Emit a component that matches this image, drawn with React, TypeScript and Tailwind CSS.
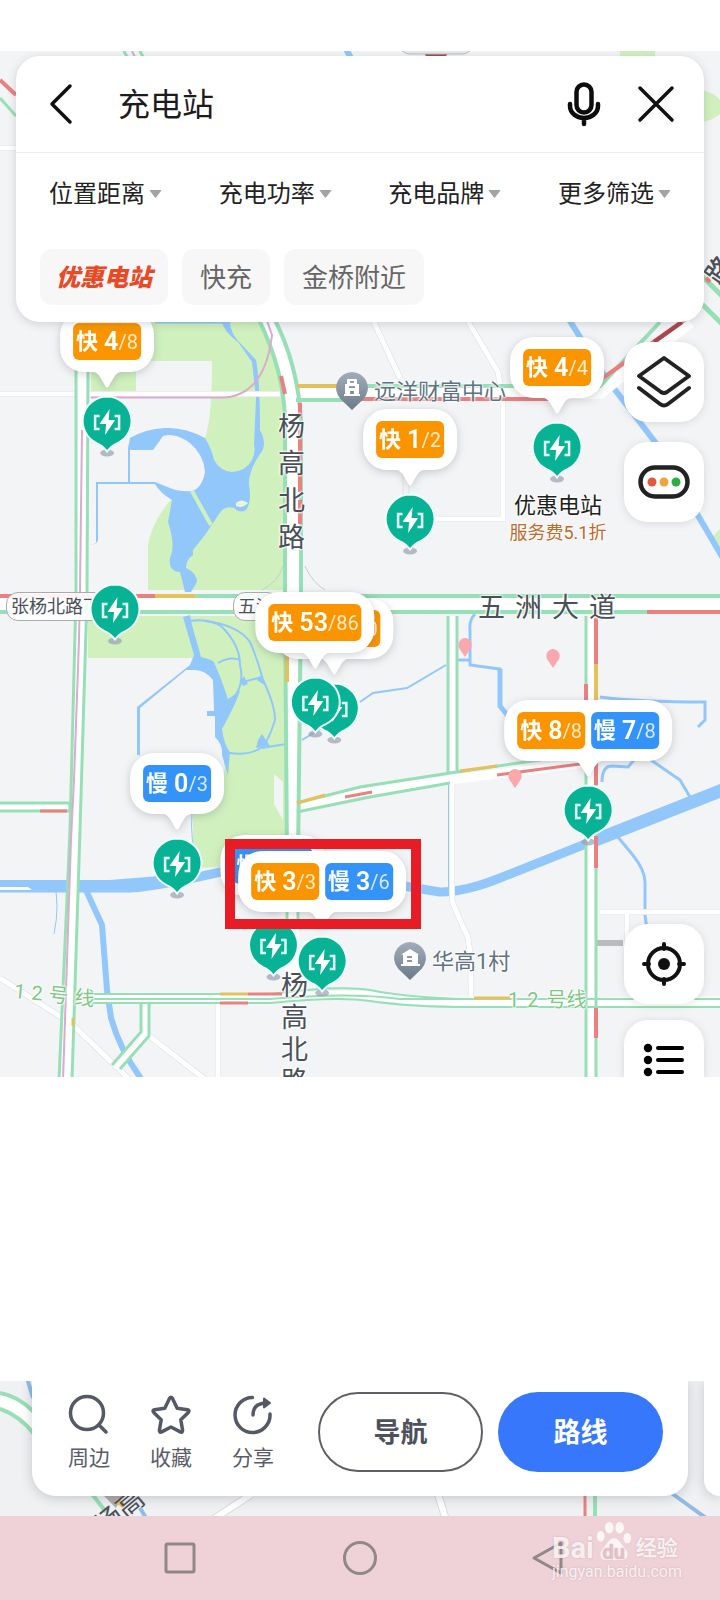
import type { ReactNode } from "react"

// map drawings keep the coordinates of the whole screen, the map starts below the status bar
const MAP_TOP = 51

type Badge = { kind: "fast" | "slow"; free: number; total: number }

interface Station {
  x: number
  y: number
  badges: Badge[]
}

const stations: Station[] = [
  { x: 107, y: 421, badges: [{ kind: "fast", free: 4, total: 8 }] },
  { x: 557, y: 447, badges: [{ kind: "fast", free: 4, total: 4 }] },
  { x: 410, y: 519, badges: [{ kind: "fast", free: 1, total: 2 }] },
  { x: 115, y: 609, badges: [] },
  { x: 334, y: 708, badges: [{ kind: "fast", free: 12, total: 60 }] },
  { x: 315, y: 702, badges: [{ kind: "fast", free: 53, total: 86 }] },
  {
    x: 588,
    y: 810,
    badges: [
      { kind: "fast", free: 8, total: 8 },
      { kind: "slow", free: 7, total: 8 },
    ],
  },
  { x: 177, y: 863, badges: [{ kind: "slow", free: 0, total: 3 }] },
  { x: 273, y: 945, badges: [{ kind: "slow", free: 0, total: 10 }] },
  {
    x: 322,
    y: 961,
    badges: [
      { kind: "fast", free: 3, total: 3 },
      { kind: "slow", free: 3, total: 6 },
    ],
  },
]

const filters = ["位置距离", "充电功率", "充电品牌", "更多筛选"]

const halo = "[text-shadow:0_0_2px_#fff,0_0_2px_#fff,0_0_3px_#fff,0_0_3px_#fff]"

function StationPin() {
  return (
    <svg width="54" height="64" viewBox="0 0 54 64" className="shrink-0">
      <ellipse cx="27" cy="59" rx="7" ry="3.500" fill="#9a9fb0" opacity="0.7" />
      <path
        d="M27 2.500a24.500 24.500 0 0 1 10.500 46.600c-4 1.700-7.500 4.400-10.500 8.400c-3-4-6.500-6.700-10.500-8.400A24.500 24.500 0 0 1 27 2.500z"
        fill="#07b394"
        stroke="#effffb"
        strokeWidth="2"
      />
      <path d="M19.500 22H15v13h4.500M34.500 22H39v13h-4.500" fill="none" stroke="#e6fff8" strokeWidth="2.500" />
      <path d="M29.500 15L19.500 30h6.500L25 41l10-15h-6.500z" fill="#fff" />
    </svg>
  )
}

function CountBadge({ badge }: { badge: Badge }) {
  const fast = badge.kind === "fast"
  return (
    <span
      className={`flex h-[37px] items-center rounded-md px-[3px] text-white ${fast ? "bg-[#fa9500]" : "bg-[#3393f9]"}`}
    >
      <span className="mr-1.5 text-[22px] font-bold">{fast ? "快" : "慢"}</span>
      <span className="text-[25px] font-semibold">{badge.free}</span>
      <span className="text-xl text-white/80">/{badge.total}</span>
    </span>
  )
}

function StationMarker({ station }: { station: Station }) {
  return (
    <div
      className="absolute flex -translate-x-1/2 -translate-y-full flex-col items-center"
      style={{ left: station.x, top: station.y + 37 - MAP_TOP }}
    >
      {station.badges.length > 0 && (
        <div className="mb-1.5 flex flex-col items-center drop-shadow-[0_2px_4px_rgba(60,70,80,0.25)]">
          <div className="flex gap-1.5 rounded-3xl bg-white px-[13px] py-3">
            {station.badges.map((badge) => (
              <CountBadge key={badge.kind} badge={badge} />
            ))}
          </div>
          <svg width="28" height="16" viewBox="0 0 28 16" className="block">
            <path d="M0 0h28c-3 0-5 2-7 5l-5.500 9.500q-1.500 2-3 0L7 5C5 2 3 0 0 0z" fill="#fff" />
          </svg>
        </div>
      )}
      <StationPin />
    </div>
  )
}

function PlacePin({ house }: { house?: boolean }) {
  return (
    <svg width="32" height="38" viewBox="0 0 32 38">
      <defs>
        <linearGradient id="placePin" x1="0" y1="0" x2="0" y2="1">
          <stop offset="0" stopColor="#a3adb9" />
          <stop offset="1" stopColor="#6b7a8a" />
        </linearGradient>
      </defs>
      <path d="M16 0a16 16 0 0 1 11.500 27L16 38L4.500 27A16 16 0 0 1 16 0z" fill="url(#placePin)" />
      {house ? (
        <path fillRule="evenodd" d="M16 7l9 5.500h-1V22h2v2H7v-2h2v-9.500H7zM13 14v2h5v-2zM13 18v2h5v-2z" fill="#fff" />
      ) : (
        <path fillRule="evenodd" d="M11 7h10v5h2v10h1v2H8v-2h1V12h2zM14 9v2h4V9zM13 14v2h6v-2zM14 19v3h4v-3z" fill="#fff" />
      )}
    </svg>
  )
}

function MapDrawing() {
  return (
    <svg viewBox="0 51 720 1026" preserveAspectRatio="xMidYMin slice" className="block h-full w-full" aria-hidden="true">
      {/* Parks */}
      <g fill="#d0f1be">
        <path d="M110 300H252L268 330L283 380L286 590H148V545Q152 520 175 495L190 470L206 435Q212 415 212 361H155L136 361V392H91V310z" />
        <path d="M88 616H287V865L193 868V800L225 770L215 668L195 658H88z" />
        <path d="M620 51h35v8h-35zM700 90q14 2 20 10v14q-10 8-20 8zM713 536l7-7v18z" />
      </g>
      <path d="M274 774l9 8v38l-9-16z" fill="#f3f4f6" />

      {/* Water */}
      <g fill="#92c7fc">
        <path d="M130 438Q145 429 165 428Q185 427 205 438Q212 450 214 460Q220 471 232 472Q246 471 252 460Q256 452 254 445L256 398L252 362L238 342Q224 332 222 322H230Q230 334 243 346L256 360Q260 380 260 430Q268 445 260 454Q248 472 249 485Q252 502 246 510Q240 514 234 508Q224 505 219 514L205 535L193 550V555Q186 560 186 568Q197 573 197 582L191 592H185L180 572Q168 572 170 558Q176 546 168 522L172 500Q160 493 155 484H98V540Q97 545 90 544H96V482H128V448z" />
        <path d="M183 617L190 615L192 625L201 657Q213 660 214 662Q222 680 228 699Q236 694 240 690Q238 700 222 729Q224 745 230 752L228 775L222 755Q223 745 215 737V716H207V711H214L213 680Q205 670 195 670L186 670L140 708V755H137V707L190 665L194 655z" />
      </g>
      <path d="M130 450H153L163 436Q175 432 190 443Q204 455 205 472Q202 488 192 491Q180 492 170 488L155 482H130z" fill="#f3f4f6" />
      <path d="M192 491L211 525" stroke="#d0f1be" strokeWidth="4" />
      <path d="M236 503q5-5 12 0q-6 6-12 3z" fill="#e9f7d8" />
      <g fill="none" stroke="#92c7fc" strokeWidth="2">
        <path d="M190 621Q210 618 222 627Q240 645 240 665Q245 685 232 700" />
        <path d="M205 621Q238 625 250 642Q258 660 263 680Q275 705 275 720Q268 742 262 747Q250 756 230 753M243 682L262 677M262 748L286 744M218 663Q230 656 240 660" />
        <path d="M155 322H228" strokeWidth="3" />
        <path d="M54 882Q60 905 54 934" strokeWidth="1" />
        <path d="M192 813Q190 840 197 862" strokeWidth="1" />
        <path d="M302 740L322 728M360 702L373 693L407 688L446 665" />
        <path d="M458 660H470M475 614Q469 620 470 630V665L500 669V708M600 697Q640 702 705 702V720L698 727" strokeWidth="3" />
        <path d="M500 669V706L508 716" strokeWidth="5" />
        <path d="M602 782Q602 766 612 766L628 767L634 760M651 760L680 780L690 797M617 836L632 854Q645 870 645 882V915L647 930" strokeWidth="3" />
        <path d="M449 780V890" strokeWidth="2" />
      </g>
      <path d="M258 740l4-6l8 12l-14 2zM240 682l4-6l4 8l-5 2zM257 680l5-6l4 12z" fill="#92c7fc" />
      <g fill="none" stroke="#92c7fc" strokeLinejoin="round">
        <path d="M0 888H130Q160 886 225 871Q300 862 350 875Q400 886 440 892Q465 892 500 878L588 843" strokeWidth="9" />
        <path d="M0 886H110L160 882" strokeWidth="12" />
        <path d="M588 843L730 787" strokeWidth="13" />
        <path d="M85 888L102 925L107 990L111 1018Q120 1050 142 1080" strokeWidth="6" />
        <path d="M568 318L606 378L655 442L724 560M345 47L352 60" strokeWidth="6" />
      </g>
      <path d="M0 887h28l4 3H0z" fill="#fff" />

      {/* Minor roads */}
      <g fill="none" stroke="#d9dbde" strokeWidth="6">
        <path d="M0 394H280M372 318L400 378M466 318L498 372L503 400V519H432" />
        <path d="M452 778V900Q455 910 467 935Q471 945 471 996M600 912H724M627 912V950M218 1004V1080M0 978L72 1024L130 1080M148 1035L206 1080M0 148H16" />
      </g>
      <g fill="none" stroke="#fff" strokeWidth="5">
        <path d="M0 394H280M372 318L400 378M466 318L498 372L503 400V519H432" />
        <path d="M452 778V900Q455 910 467 935Q471 945 471 996M600 912H724M627 912V950M218 1004V1080M0 978L72 1024L130 1080M148 1035L206 1080M0 148H16" />
      </g>
      <path d="M403 410V500M409 410V500" stroke="#e2e4e7" strokeWidth="1" />
      <path d="M262 590Q278 582 283 566M305 566Q312 582 325 590" fill="none" stroke="#c9ccd0" strokeWidth="1" />
      <path d="M592 943H623" stroke="#b9bcc1" strokeWidth="6" />

      {/* Main roads, white core between two traffic lines */}
      <g fill="none" stroke="#fff">
        <path d="M82 370V595L75 830L65 1080" strokeWidth="12" />
        <path d="M266 318Q290 365 293 410V600L292 860V990" strokeWidth="14" />
        <path d="M0 604H724" strokeWidth="18" />
        <path d="M296 393H600L690 322" strokeWidth="12" />
        <path d="M0 807H72M297 808L360 792L450 780L592 762M453 616V780M591 616V1080M88 999H270Q350 992 400 998T724 1001M145 1003V1034L116 1066" strokeWidth="9" />
      </g>
      <g fill="none" stroke="#97dfb6" strokeWidth="3">
        <path d="M76 370V595L70 830L59 1080M88 370L87 595L80 830L72 1080" />
        <path d="M258 318Q284 370 285 420V600L287 860M274 318Q298 365 301 420V600L298 860" strokeWidth="4" />
        <path d="M287 860V925M298 860V925" strokeWidth="3" />
        <path d="M0 596H724M0 612H724" strokeWidth="4" />
        <path d="M296 386H600L660 322M296 400H350" strokeWidth="4" />
        <path d="M0 803H70V811H0M297 803L360 787L450 773L560 757M297 812L370 797L450 783M448 616V773M457 616V772M586 616V1080M596 616V1080" />
        <path d="M88 994H270Q340 985 370 990Q410 998 470 999H724M88 1003H270Q340 996 370 1001Q410 1007 470 1007H724M88 999H270Q350 992 400 999H500" strokeWidth="2" />
        <path d="M141 1003V1032L112 1065M149 1003V1036L120 1069" />
        <path d="M0 98L16 116M124 51l4 8M140 51l4 8" />
        <path d="M702 276L724 298M702 304L724 326" strokeWidth="5" />
      </g>
      <g fill="none" stroke="#ea8080" strokeWidth="4">
        <path d="M0 596H155M281 376L285 394M300 403V418M300 430V460M300 472V492M300 500V524M350 399H550M647 612H724M586 684V700M596 618V664M596 760V785M596 836V868M596 1008V1038" />
        <path d="M600 380L690 316M0 80L16 95M706 278l4 4" />
        <path d="M497 775L580 764M345 797L372 792M40 811H67M248 994H282M220 1003H248" strokeWidth="3" />
      </g>
      <path d="M654 342L682 322M425 51h22l-4 6h-14z" fill="#a94650" stroke="#a94650" strokeWidth="4" />
      <g fill="none" stroke="#e5c15c" strokeWidth="4">
        <path d="M155 596H195M297 386H345M287 655V682M596 664V700" />
        <path d="M297 803L325 795M460 771L497 766M220 994H248M474 998H510M73 1018V1026" strokeWidth="3" />
      </g>
      <path d="M400 46h72q-2 8-10 8h-52q-8 0-10-8z" fill="#e8eaec" stroke="#b9bcc1" />

      {/* Metro line */}
      <path d="M91 397.500H225Q265 394 272 335L266 318M82 430L80 590L79 640L74 780L71 840L63 1080M132 51l4 8" fill="none" stroke="#dca9cf" strokeWidth="2" />

      {/* Small place drops */}
      <g fill="#f9a9ad">
        <path id="drop" d="M465 638a7 7 0 0 1 6 10l-6 9l-6-9a7 7 0 0 1 6-10z" />
        <use href="#drop" x="88" y="11" />
        <use href="#drop" x="50" y="131" />
      </g>
    </svg>
  )
}

function RoundButton({ label, children }: { label: string; children: ReactNode }) {
  return (
    <button
      type="button"
      aria-label={label}
      className="flex size-20 items-center justify-center rounded-3xl bg-white shadow-[0_1px_8px_rgba(60,70,80,0.15)]"
    >
      {children}
    </button>
  )
}

function SearchCard() {
  return (
    <section className="relative mx-4 mt-[5px] rounded-3xl bg-white shadow-[0_2px_10px_rgba(60,70,80,0.2)]">
      <div className="flex h-[97px] items-center border-b border-[#ececee] pr-[29px] pl-8">
        <button type="button" aria-label="返回">
          <svg width="26" height="44" viewBox="0 0 26 44" fill="none" stroke="#111" strokeWidth="3.500" strokeLinecap="round" strokeLinejoin="round">
            <path d="M22 4L4 22l18 18" />
          </svg>
        </button>
        <input
          aria-label="搜索"
          defaultValue="充电站"
          className="ml-11 min-w-0 flex-1 bg-transparent pt-0.5 text-[32px] text-[#1c1c1e] outline-none"
        />
        <button type="button" aria-label="语音">
          <svg width="34" height="46" viewBox="0 0 34 46" fill="none" stroke="#0c0c0d" strokeLinecap="round">
            <rect x="9.500" y="3.500" width="15" height="28" rx="7.500" strokeWidth="4.500" />
            <path d="M3 23v2a14 12 0 0 0 28 0v-2M17 38v5" strokeWidth="4.500" />
          </svg>
        </button>
        <button type="button" aria-label="关闭" className="ml-9">
          <svg width="38" height="38" viewBox="0 0 38 38" fill="none" stroke="#111" strokeWidth="3.500" strokeLinecap="round">
            <path d="M3 3l32 32M35 3L3 35" />
          </svg>
        </button>
      </div>

      <div className="flex h-20 items-center justify-between px-[33px] pt-0.5">
        {filters.map((name) => (
          <label key={name} className="flex items-center gap-1">
            <select aria-label={name} className="appearance-none bg-transparent text-2xl text-[#222]">
              <option>{name}</option>
            </select>
            <svg width="13" height="8" viewBox="0 0 13 8">
              <path d="M1 0h11q1 0 0 1L7 7.500q-.5.500-1 0L1 1Q0 0 1 0z" fill="#a3a3a6" />
            </svg>
          </label>
        ))}
      </div>

      <div className="flex gap-3.5 px-6 pt-4 pb-[17px]">
        <button type="button" className="h-14 rounded-xl bg-[#f7f7f7] px-4 pt-0.5 text-2xl font-black text-[#e84a28] italic">
          优惠电站
        </button>
        <button type="button" className="h-14 rounded-xl bg-[#f7f7f7] px-[18px] pt-0.5 text-[26px] text-[#666]">
          快充
        </button>
        <button type="button" className="h-14 rounded-xl bg-[#f7f7f7] px-[18px] pt-0.5 text-[26px] text-[#666]">
          金桥附近
        </button>
      </div>
    </section>
  )
}

function MapLabels() {
  return (
    <div className="text-[#4b5058]">
      <div className={`absolute top-[358px] left-[278px] w-[27px] text-center text-[27px] leading-[37px] ${halo}`}>
        {"杨高北路".split("").map((c) => (
          <div key={c}>{c}</div>
        ))}
      </div>
      <div className={`absolute top-[919px] left-[281px] w-[27px] text-center text-[27px] leading-8 ${halo}`}>
        {"杨高北路".split("").map((c) => (
          <div key={c}>{c}</div>
        ))}
      </div>
      <div className={`absolute top-[539px] left-[478px] flex gap-2.5 text-[27px] leading-9 ${halo}`}>
        {"五洲大道".split("").map((c) => (
          <span key={c}>{c}</span>
        ))}
      </div>
      <span className="absolute top-[541px] left-1.5 rounded-xl border border-[#a9abb0] bg-white/90 px-1 text-lg leading-[27px]">
        张杨北路下
      </span>
      <span className="absolute top-[541px] left-[233px] rounded-xl border border-[#a9abb0] bg-white/90 px-1 text-lg leading-[27px]">
        五洲
      </span>
      <span className="absolute top-[203px] left-[706px] -rotate-55 text-[26px] leading-8 font-medium">路</span>

      <div className="absolute top-[321px] left-[336px] flex gap-1.5 text-[22px] leading-10 text-[#5f7282]">
        <PlacePin />
        <span className={halo}>远洋财富中心</span>
      </div>
      <div className="absolute top-[891px] left-[394px] flex gap-1.5 text-[22px] leading-10 text-[#5f7282]">
        <PlacePin house />
        <span className={halo}>华高1村</span>
      </div>

      <div className={`absolute top-[930px] left-[14px] flex rotate-6 gap-1.5 text-xl leading-7 text-[#7dc883] ${halo}`}>
        <span>1</span>
        <span>2</span>
        <span>号</span>
        <span>线</span>
      </div>
      <div className={`absolute top-[935px] left-[508px] flex gap-2 text-xl leading-7 text-[#7dc883] ${halo}`}>
        <span>1</span>
        <span>2</span>
        <span>号线</span>
      </div>

      <div className={`absolute top-[441px] left-[558px] -translate-x-1/2 text-center whitespace-nowrap ${halo}`}>
        <p className="text-[22px] leading-7 text-[#1f1f22]">优惠电站</p>
        <p className="text-lg leading-[26px] text-[#c06a2a]">服务费5.1折</p>
      </div>
    </div>
  )
}

function MapView() {
  return (
    <main className="relative h-[1026px] overflow-hidden bg-[#f3f4f6]">
      <div className="absolute inset-0">
        <MapDrawing />
      </div>
      <MapLabels />
      {stations.map((station) => (
        <StationMarker key={`${station.x}-${station.y}`} station={station} />
      ))}
      <div className="absolute top-[788px] left-[225px] h-[90px] w-[196px] border-10 border-[#e81c24]" />

      <div className="absolute top-[291px] right-4 flex flex-col gap-5">
        <RoundButton label="图层">
          <svg width="56" height="54" viewBox="0 0 56 54" fill="none" stroke="#222" strokeWidth="4" strokeLinecap="round" strokeLinejoin="round">
            <path d="M28 3L53 21L31 37q-3 2-6 0L3 21z" />
            <path d="M3 33l21 16q4 3 8 0l21-16" />
          </svg>
        </RoundButton>
        <RoundButton label="路况">
          <svg width="52" height="34" viewBox="0 0 52 34">
            <rect x="2.500" y="2.500" width="47" height="29" rx="14.500" fill="#fff" stroke="#222" strokeWidth="4.500" />
            <circle cx="14" cy="17" r="4.500" fill="#e4583f" />
            <circle cx="26" cy="17" r="4.500" fill="#eda53c" />
            <circle cx="38" cy="17" r="4.500" fill="#2fac45" />
          </svg>
        </RoundButton>
      </div>

      <div className="absolute top-[873px] right-4 flex flex-col gap-4">
        <RoundButton label="定位">
          <svg width="44" height="44" viewBox="0 0 44 44" fill="none" stroke="#111" strokeWidth="4" strokeLinecap="round">
            <circle cx="22" cy="22" r="16" />
            <path d="M22 2v5M22 37v5M2 22h5M37 22h5" />
            <circle cx="22" cy="22" r="6" fill="#111" stroke="none" />
          </svg>
        </RoundButton>
        <RoundButton label="列表">
          <svg width="42" height="34" viewBox="0 0 42 34" fill="#000">
            <circle cx="5" cy="5" r="4.200" />
            <circle cx="5" cy="17" r="4.200" />
            <circle cx="5" cy="29" r="4.200" />
            <path d="M15 5h24M15 17h24M15 29h24" stroke="#000" strokeWidth="4" strokeLinecap="round" />
          </svg>
        </RoundButton>
      </div>

      <div className="flow-root">
        <SearchCard />
      </div>
    </main>
  )
}

function ActionButton({ label, children }: { label: string; children: ReactNode }) {
  return (
    <button type="button" className="flex flex-col items-center gap-2 pt-0.5 text-[21px] leading-7 text-[#5a5d68]">
      <svg width="42" height="42" viewBox="0 0 42 42" fill="none" stroke="#555966" strokeWidth="3.500" strokeLinecap="round" strokeLinejoin="round">
        {children}
      </svg>
      {label}
    </button>
  )
}

function DetailBar() {
  return (
    <section className="relative flex gap-4 overflow-hidden bg-[#f0f1f3] pb-5 pl-8">
      <svg viewBox="0 1381 720 135" preserveAspectRatio="xMidYMin slice" className="absolute inset-0 h-full w-full" aria-hidden="true">
        <path d="M0 1400Q20 1406 36 1425" fill="none" stroke="#fff" strokeWidth="12" />
        <path d="M0 1393Q18 1396 34 1412M0 1409Q20 1416 34 1434M92 1494l14 18M595 1490v30" fill="none" stroke="#97dfb6" strokeWidth="4" />
        <path d="M27 1378l6 20M140 1508l6 10M670 1492l36 26" stroke="#8fbbe6" strokeWidth="4" />
        <path d="M104 1496h18l-6 12z" fill="#aaacae" />
        <path d="M116 1500l8 6" stroke="#e5c15c" strokeWidth="5" />
        <path d="M212 1520l40-26M438 1494l8 26" stroke="#d9dbde" strokeWidth="8" />
        <path d="M212 1520l40-26M438 1494l8 26" stroke="#fff" strokeWidth="6" />
        <path d="M585 1490v30" stroke="#ea8080" strokeWidth="3" />
      </svg>
      <span className="absolute bottom-[-12px] left-[93px] -rotate-40 text-[27px] leading-8 text-[#4b5058]">杨高</span>

      <div className="relative flex flex-1 items-center rounded-b-3xl bg-white pt-[11px] pr-[25px] pb-6 pl-9 shadow-[0_2px_12px_rgba(60,70,80,0.25)]">
        <div className="flex gap-10">
          <ActionButton label="周边">
            <circle cx="19" cy="19" r="16.500" />
            <path d="M31 31l7 7" />
          </ActionButton>
          <ActionButton label="收藏">
            <path d="M19.500 4.500q1.500-2.500 3 0l4.700 9.800l10.300 1.500q2.500.7.800 2.600l-7.500 7.400l1.800 10.500q0 2.500-2.300 1.600L21 33l-9.300 4.900q-2.300.9-2.300-1.600l1.800-10.500l-7.500-7.400q-1.700-1.900.8-2.600l10.300-1.500z" />
          </ActionButton>
          <ActionButton label="分享">
            <path d="M20.500 3.500A17.500 17.500 0 1 0 38 20" />
            <path d="M21 21q0-12 14-12" />
            <path d="M32 4.500l6 4.500l-6 4.500z" fill="#555966" strokeWidth="2" />
          </ActionButton>
        </div>
        <div className="ml-11 grid flex-1 grid-cols-2 gap-[15px]">
          <button type="button" className="h-20 rounded-full border-2 border-[#5f6066] pt-0.5 text-[27px] font-bold text-[#4d515d]">
            导航
          </button>
          <button type="button" className="h-20 rounded-full bg-[#3677fc] pt-0.5 text-[27px] font-bold text-white">
            路线
          </button>
        </div>
      </div>
      <div className="relative w-4 rounded-bl-3xl bg-white shadow-[0_2px_12px_rgba(60,70,80,0.25)]" />
    </section>
  )
}

function SystemNav() {
  return (
    <nav className="relative flex h-[84px] items-center justify-center gap-36 bg-[#eed2d8]">
      <button type="button" aria-label="最近任务">
        <svg width="36" height="36" viewBox="0 0 36 36" fill="none" stroke="#918788" strokeWidth="3">
          <rect x="4" y="4" width="28" height="28" rx="1.500" />
        </svg>
      </button>
      <button type="button" aria-label="主屏幕">
        <svg width="36" height="36" viewBox="0 0 36 36" fill="none" stroke="#918788" strokeWidth="3">
          <circle cx="18" cy="18" r="15.500" />
        </svg>
      </button>
      <button type="button" aria-label="后退">
        <svg width="36" height="36" viewBox="0 0 36 36" fill="none" stroke="#918788" strokeWidth="3" strokeLinejoin="round" className="overflow-visible">
          <path d="M39 3v30L12 18z" />
        </svg>
      </button>

      {/* Watermark */}
      <div className="absolute top-1.5 right-10 flex w-32 flex-col text-white/80 [text-shadow:0_0_2px_rgba(150,110,120,0.4)]">
        <div className="flex h-10 items-end font-bold">
          <span className="text-[29px] leading-7">Bai</span>
          <span className="relative ml-0.5 flex w-9 justify-center">
            <svg width="38" height="42" viewBox="0 0 40 42" fill="currentColor" className="shrink-0">
              <ellipse cx="6" cy="16" rx="4" ry="5.500" />
              <ellipse cx="15" cy="7" rx="4.500" ry="6" />
              <ellipse cx="26" cy="7" rx="4.500" ry="6" />
              <ellipse cx="34" cy="18" rx="4" ry="5.500" />
              <path d="M20 18c5 0 7 6 11 10c5 5 4 13-3 13H12c-7 0-8-8-3-13c4-4 6-10 11-10z" />
            </svg>
            <span className="absolute bottom-0 text-xl leading-5 text-[#e3bfc6]">du</span>
          </span>
          <span className="ml-1 text-[21px] leading-7">经验</span>
        </div>
        <span className="text-base leading-5">jingyan.baidu.com</span>
      </div>
    </nav>
  )
}

export default function App() {
  return (
    <div className="bg-white pt-[51px] font-[Roboto,'Noto_Sans_CJK_SC',sans-serif]">
      <MapView />
      <div className="h-[304px]" />
      <DetailBar />
      <SystemNav />
    </div>
  )
}
